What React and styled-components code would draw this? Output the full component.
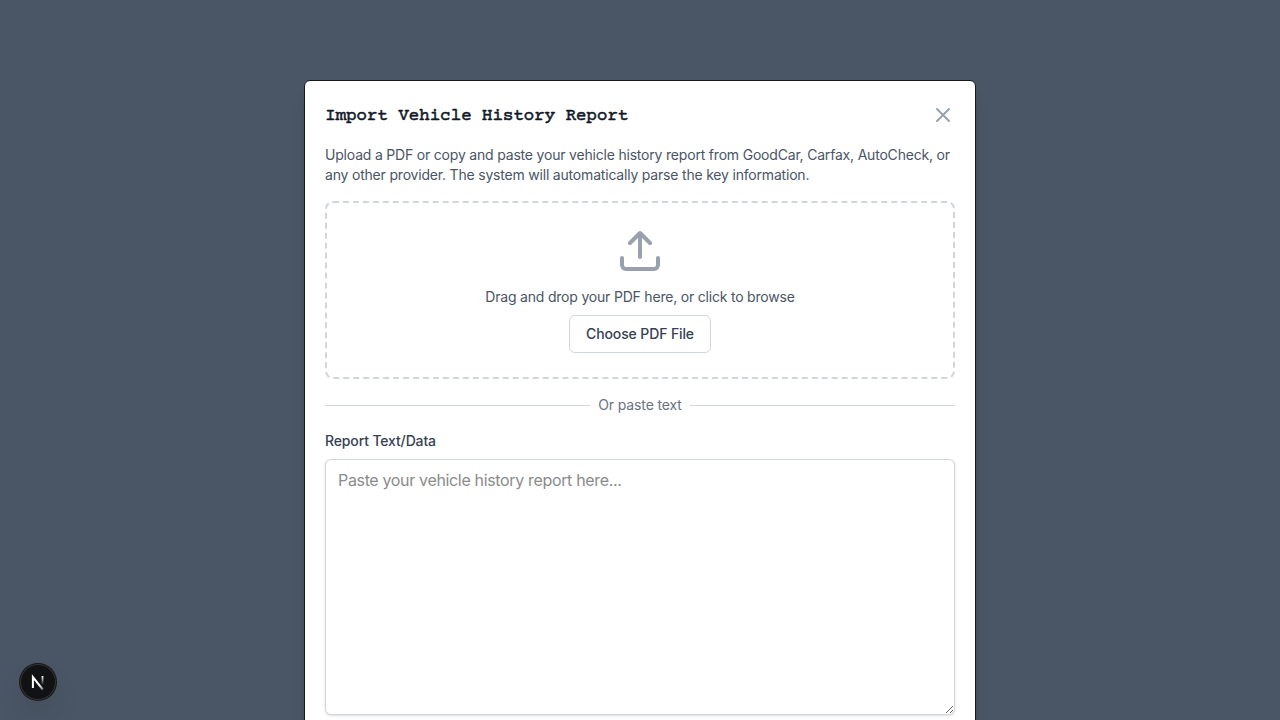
import React from "react";
import styled, { createGlobalStyle } from "styled-components";

const GlobalStyle = createGlobalStyle`
  *, *::before, *::after { box-sizing: border-box; }
  html, body { margin: 0; height: 100%; overflow: hidden; }
  body {
    background: #4a5565;
    font-family: Inter, "Liberation Sans", sans-serif;
    font-size: 14px;
    line-height: 20px;
    color: #4a5565;
    -webkit-font-smoothing: antialiased;
  }
  h3, p { margin: 0; }
`;

const Overlay = styled.div`
  height: 100vh;
  padding-top: 80px;
  overflow: hidden;
`;

const Modal = styled.div`
  width: 672px;
  height: 780px;
  margin: 0 auto;
  padding: 20px;
  background: #fff;
  border: 1px solid #18181b;
  border-radius: 6px;
  box-shadow: 0 10px 15px -3px rgba(0, 0, 0, 0.1), 0 4px 6px -4px rgba(0, 0, 0, 0.1);
`;

const Header = styled.div`
  display: flex;
  align-items: center;
  justify-content: space-between;
  margin-bottom: 16px;
`;

const Title = styled.h3`
  height: 28px;
  font-family: "Courier Prime", Courier, "Courier New", "Liberation Mono", monospace;
  font-size: 18px;
  line-height: 30px;
  font-weight: 400;
  -webkit-text-stroke: 0.5px #101828;
  letter-spacing: -0.34px;
  color: #101828;
`;

const CloseButton = styled.button`
  display: flex;
  padding: 0;
  border: 0;
  background: none;
  color: #99a1af;
`;

const Description = styled.p`
  margin-bottom: 16px;
  letter-spacing: -0.195px;
`;

const DropZone = styled.div`
  display: flex;
  flex-direction: column;
  align-items: center;
  padding: 24px;
  border: 2px dashed #d1d5dc;
  border-radius: 8px;
  color: #99a1af;
`;

const DropText = styled.p`
  margin: 12px 0 8px;
  letter-spacing: -0.2px;
  color: #4a5565;
`;

const ChooseButton = styled.button`
  height: 38px;
  padding: 8px 16px;
  border: 1px solid #d1d5dc;
  border-radius: 6px;
  background: #fff;
  color: #364153;
  font: 500 14px/20px Inter, sans-serif;
  letter-spacing: -0.12px;
`;

const Divider = styled.div`
  display: flex;
  align-items: center;
  gap: 8px;
  margin: 16px 0;
  letter-spacing: -0.12px;
  color: #6a7282;

  &::before, &::after {
    content: "";
    flex: 1;
    height: 1px;
    background: #d1d5dc;
  }
`;

const Label = styled.label`
  display: block;
  margin-bottom: 8px;
  font-weight: 500;
  letter-spacing: -0.14px;
  color: #364153;
`;

const ReportInput = styled.textarea`
  display: block;
  width: 100%;
  height: 256px;
  padding: 8px 12px;
  border: 1px solid #d1d5dc;
  border-radius: 6px;
  box-shadow: 0 1px 3px rgba(0, 0, 0, 0.1), 0 1px 2px -1px rgba(0, 0, 0, 0.1);
  font: 400 16px/24px Inter, sans-serif;
  letter-spacing: -0.34px;
  resize: vertical;

  &::placeholder { color: #8b8b8b; }
`;

const DevBadge = styled.div`
  position: fixed;
  left: 20px;
  bottom: 20px;
  width: 36px;
  height: 36px;
  border-radius: 50%;
  background: #111214;
  box-shadow: 0 0 0 1px #171717, inset 0 0 0 1px #343434, 0 16px 32px -8px rgba(0, 0, 0, 0.24);
  display: flex;
  align-items: center;
  justify-content: center;
`;

const CloseIcon = () => (
  <svg width="24" height="24" viewBox="0 0 24 24" fill="none" stroke="currentColor" strokeWidth="2" strokeLinecap="round" strokeLinejoin="round">
    <path d="M6 18L18 6M6 6l12 12" />
  </svg>
);

const UploadIcon = () => (
  <svg width="48" height="48" viewBox="0 0 48 48" fill="none" stroke="currentColor" strokeWidth="4" strokeLinecap="round" strokeLinejoin="round">
    <path d="M6 31v7a4 4 0 0 0 4 4h28a4 4 0 0 0 4-4v-7M34 16L24 6 14 16M24 6v24" />
  </svg>
);

const NextIcon = () => (
  <svg width="36" height="36" viewBox="0 0 36 36" fill="none">
    <defs>
      <linearGradient id="diag" x1="20" y1="20" x2="25" y2="26.5" gradientUnits="userSpaceOnUse">
        <stop stopColor="#fff" />
        <stop offset="1" stopColor="#fff" stopOpacity="0.25" />
      </linearGradient>
      <linearGradient id="stem" x1="23" y1="12" x2="23" y2="21" gradientUnits="userSpaceOnUse">
        <stop stopColor="#fff" />
        <stop offset="1" stopColor="#fff" stopOpacity="0" />
      </linearGradient>
    </defs>
    <path d="M12.9 24V13.2L22.8 25.5" stroke="url(#diag)" strokeWidth="2" />
    <path d="M22.5 12v9" stroke="url(#stem)" strokeWidth="1.8" />
  </svg>
);

export default function App() {
  return (
    <>
      <GlobalStyle />
      <Overlay>
        <Modal role="dialog">
          <Header>
            <Title>Import Vehicle History Report</Title>
            <CloseButton aria-label="Close"><CloseIcon /></CloseButton>
          </Header>
          <Description>
            Upload a PDF or copy and paste your vehicle history report from GoodCar, Carfax, AutoCheck, or any other provider. The system will automatically parse the key information.
          </Description>
          <DropZone>
            <UploadIcon />
            <DropText>Drag and drop your PDF here, or click to browse</DropText>
            <ChooseButton>Choose PDF File</ChooseButton>
          </DropZone>
          <Divider>Or paste text</Divider>
          <Label htmlFor="report">Report Text/Data</Label>
          <ReportInput id="report" placeholder="Paste your vehicle history report here..." />
        </Modal>
      </Overlay>
      <DevBadge><NextIcon /></DevBadge>
    </>
  );
}
